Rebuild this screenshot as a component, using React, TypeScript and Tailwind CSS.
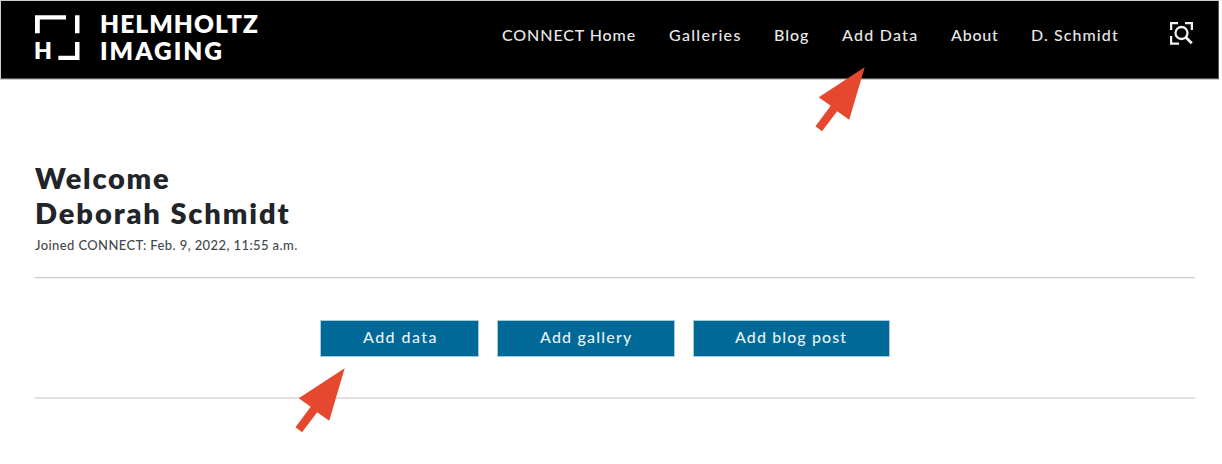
const navItems = [
  { label: "CONNECT Home", box: "w-[134px] tracking-[0.9px]" },
  { label: "Galleries", box: "w-[72px] tracking-[1.3px]" },
  { label: "Blog", box: "w-[35px] tracking-[1px]" },
  { label: "Add Data", box: "w-[76px] tracking-[1.25px]" },
  { label: "About", box: "w-[47px] tracking-[0.8px]" },
  { label: "D. Schmidt", box: "w-[88px] tracking-[1.1px]" },
];

const actions = [
  { label: "Add data", box: "w-[159px] pl-[42px] tracking-[1.45px]" },
  { label: "Add gallery", box: "w-[178px] pl-[42px] tracking-[1.2px]" },
  { label: "Add blog post", box: "w-[197px] pl-[41px] tracking-[1.1px]" },
];

function Logo() {
  return (
    <div className="flex h-[46px] text-[24.5px] font-extrabold leading-[27px]">
      <div className="relative w-[65px]">
        <svg width="46" height="46" viewBox="0 0 46 46" fill="#fff">
          <path d="M0 .3H31V4.6H4.8V18.3H0ZM40 .3H44.5V18.3H40ZM40 27H44.5V45H23.3V40.7H40Z" />
        </svg>
        <span className="absolute -left-[1px] top-[22px] text-[23px]">H</span>
      </div>
      <div className="-mt-[5px] whitespace-nowrap">
        <div className="tracking-[1.1px]">HELMHOLTZ</div>
        <div className="tracking-[2px]">IMAGING</div>
      </div>
    </div>
  );
}

function Pointer({ place }: { place: string }) {
  return (
    <svg className={`absolute ${place}`} width="52" height="66" viewBox="0 0 52 66" fill="#e5482f">
      <path d="M49.7.2 34.2 52.8 22.2 44.2 7 64.3.5 59.3 15.7 38.8 3.7 30.2Z" />
    </svg>
  );
}

export default function App() {
  return (
    <div className="relative h-[464px] w-[1222px] overflow-hidden bg-white font-['Lato',sans-serif] text-[#212529]">
      <header className="flex h-[80px] w-[1219px] border-b border-l border-t border-[#ccc] bg-black text-white">
        <div className="flex w-full border-b border-r border-[#555] pl-[34px] pt-[14px]">
          <Logo />
          <nav className="ml-auto mr-[51px] flex gap-[33px] pt-[8px] text-[16px] font-medium leading-[24px] text-[#e8e8e8]">
            {navItems.map((n) => (
              <a key={n.label} className={`whitespace-nowrap ${n.box}`}>{n.label}</a>
            ))}
          </nav>
          <svg className="mr-[25px] mt-[7px]" width="23" height="23" viewBox="0 0 23 23" fill="none" stroke="#f2f2f2" strokeWidth="2.3">
            <path d="M1.1 8V1.1H8M15 1.1H21.9V8M1.1 14V21.7H9" />
            <circle cx="11.5" cy="11" r="6" />
            <path d="m15.7 15.3 6.1 6" strokeWidth="2.7" />
          </svg>
        </div>
      </header>
      <main className="ml-[35px] w-[1160px] pt-[80px]">
        <h1 className="whitespace-nowrap text-[29px] font-extrabold leading-[35px]">
          <span className="block tracking-[1.75px]">Welcome</span>
          <span className="block tracking-[1.9px]">Deborah Schmidt</span>
        </h1>
        <p className="mt-[5px] h-[42px] whitespace-nowrap text-[13px] font-medium leading-[20px] tracking-[0.4px] text-[#43484d]">
          Joined CONNECT: Feb. 9, 2022, 11:55 a.m.
        </p>
        <div className="h-[2px] border-b border-t border-b-[#efefef] border-t-[#cdcdcd]" />
        <div className="flex h-[118px] gap-[18px] pl-[285px] pt-[41px]">
          {actions.map((a) => (
            <button key={a.label} className={`h-[37px] whitespace-nowrap border border-[#a9ccdb] bg-[#006997] pb-[3px] text-left text-[16px] font-medium text-[#e6eff3] ${a.box}`}>
              {a.label}
            </button>
          ))}
        </div>
        <div className="h-[2px] bg-[#e1e1e1]" />
      </main>
      <Pointer place="left-[815px] top-[67px]" />
      <Pointer place="left-[295px] top-[368px]" />
    </div>
  );
}
